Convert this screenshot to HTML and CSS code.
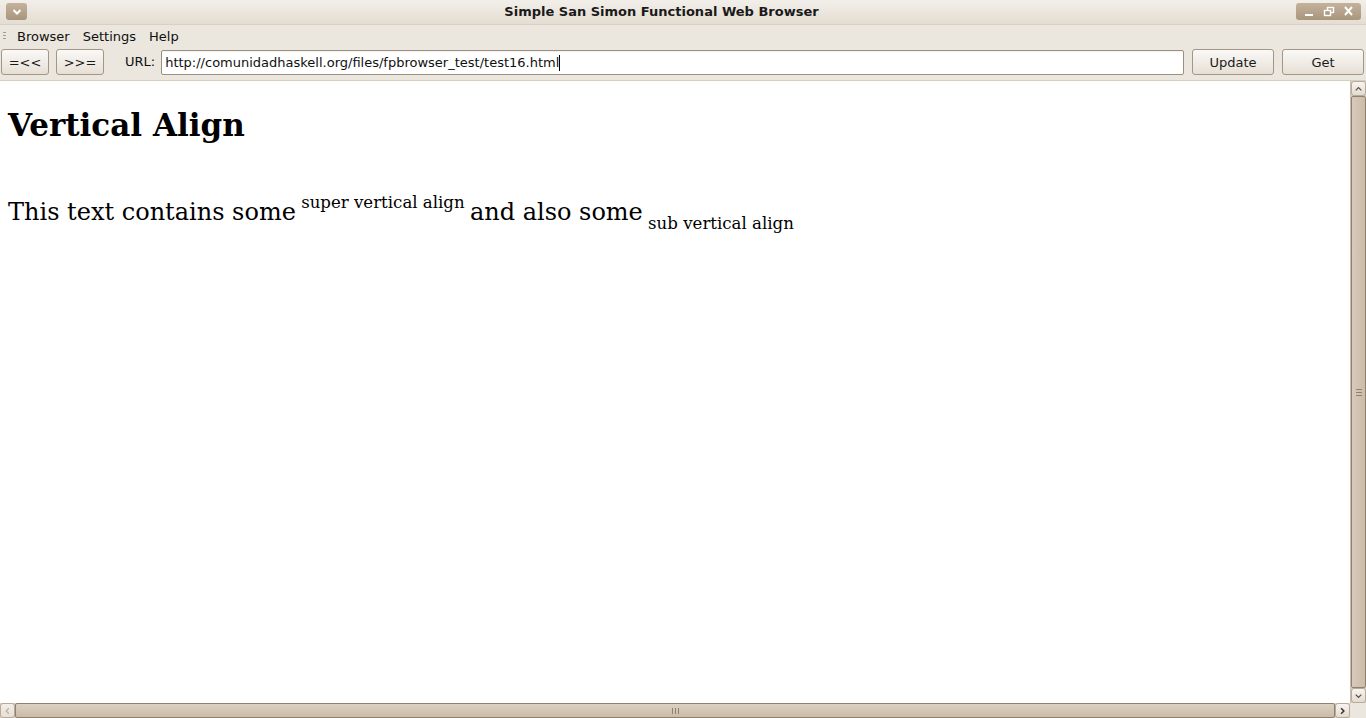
FILE: index.html
```html
<!DOCTYPE html>
<html>
<head>
<meta charset="utf-8">
<link rel="stylesheet" href="styles.css">
</head>
<body>
<div class="window">
  <div class="titlebar">
    <div class="wm-menu"><svg width="20" height="16" viewBox="0 0 20 16"><path d="M6.5 6 L10 9.5 L13.5 6" fill="none" stroke="#fff" stroke-width="2"/></svg></div>
    <div class="title">Simple San Simon Functional Web Browser</div>
    <div class="wm-buttons">
      <svg width="65" height="17" viewBox="0 0 65 17">
        <rect x="9" y="11" width="8" height="2" fill="#fff"/>
        <rect x="31.5" y="4.5" width="6" height="5" fill="none" stroke="#fff" stroke-width="1.4"/>
        <rect x="28.5" y="7.5" width="6" height="5" fill="#b19d84" stroke="#fff" stroke-width="1.4"/>
        <path d="M49 4 L56 12 M56 4 L49 12" stroke="#fff" stroke-width="2"/>
      </svg>
    </div>
  </div>
  <div class="menubar">
    <div class="grip"></div>
    <span class="menu-item">Browser</span>
    <span class="menu-item">Settings</span>
    <span class="menu-item">Help</span>
  </div>
  <div class="toolbar">
    <button class="btn btn-nav">=&lt;&lt;</button>
    <button class="btn btn-nav">&gt;&gt;=</button>
    <span class="url-label">URL:</span>
    <div class="entry">http://comunidadhaskell.org/files/fpbrowser_test/test16.html<span class="caret"></span></div>
    <button class="btn btn-wide">Update</button>
    <button class="btn btn-wide">Get</button>
  </div>
  <div class="main">
    <div class="viewport">
      <h1 class="heading">Vertical Align</h1>
      <p class="para">This text contains some<span class="sup"> super vertical align </span>and also some<span class="sub"> sub vertical align</span></p>
    </div>
    <div class="vscroll">
      <div class="sb-btn sb-up"><svg width="14" height="14" viewBox="0 0 14 14"><path d="M4 8.5 L7 5.5 L10 8.5" fill="none" stroke="#5a5048" stroke-width="1.4"/></svg></div>
      <div class="vtrough"><div class="vslider"><div class="vgrip"></div></div></div>
      <div class="sb-btn sb-down"><svg width="14" height="14" viewBox="0 0 14 14"><path d="M4 5.5 L7 8.5 L10 5.5" fill="none" stroke="#5a5048" stroke-width="1.4"/></svg></div>
    </div>
  </div>
  <div class="hscrollrow">
    <div class="hscroll">
      <div class="sb-btn sb-left"><svg width="14" height="14" viewBox="0 0 14 14"><path d="M8.5 4 L5.5 7 L8.5 10" fill="none" stroke="#bdb3a6" stroke-width="1.4"/></svg></div>
      <div class="htrough"><div class="hslider"><div class="hgrip"></div></div></div>
      <div class="sb-btn sb-right"><svg width="14" height="14" viewBox="0 0 14 14"><path d="M5.5 4 L8.5 7 L5.5 10" fill="none" stroke="#3a332c" stroke-width="1.6"/></svg></div>
    </div>
    <div class="corner"></div>
  </div>
</div>
</body>
</html>
```
FILE: styles.css
```css
* { box-sizing: border-box; }
html, body { margin: 0; padding: 0; }
body {
  width: 1366px;
  height: 718px;
  overflow: hidden;
  background: #ebe6de;
  font-family: "DejaVu Sans", sans-serif;
  font-size: 13px;
  color: #101010;
}
.window {
  display: flex;
  flex-direction: column;
  height: 718px;
}
.titlebar {
  height: 25px;
  flex: none;
  display: flex;
  align-items: center;
  padding: 0 5px 0 6px;
  background: linear-gradient(#f2efea, #e4ddd2);
  border-bottom: 1px solid #d8d0c4;
}
.wm-menu {
  width: 21px;
  height: 17px;
  border-radius: 3px;
  background: linear-gradient(#c4b29c, #a8957d);
  display: flex;
  align-items: center;
  justify-content: center;
  margin-top: -1px;
}
.title {
  flex: 1;
  text-align: center;
  font-weight: bold;
  font-size: 13px;
  color: #1a1a1a;
  margin-top: -2px;
}
.wm-buttons {
  width: 65px;
  height: 17px;
  border-radius: 3px;
  background: linear-gradient(#c4b29c, #a8957d);
  margin-top: -1px;
}
.wm-buttons svg { display: block; }
.menubar {
  height: 21px;
  flex: none;
  display: flex;
  align-items: center;
  padding-left: 3px;
  padding-top: 1px;
  background: #ebe6de;
}
.grip {
  width: 3px;
  height: 9px;
  background: repeating-linear-gradient(#a89c8c 0 1px, transparent 1px 3px);
  margin-right: 5px;
}
.menu-item {
  padding: 0 6px 0 6px;
  margin-right: 1px;
}
.toolbar {
  height: 34px;
  flex: none;
  display: flex;
  align-items: flex-start;
  padding: 3px 2px 0 1px;
  background: #ebe6de;
}
.btn {
  height: 26px;
  font-family: "DejaVu Sans", sans-serif;
  font-size: 13px;
  color: #1a1a1a;
  border: 1px solid #a39684;
  border-radius: 3px;
  background: linear-gradient(#faf9f7, #e6dfd5);
  padding: 0;
}
.btn-nav { width: 48px; margin-right: 7px; }
.btn-nav + .btn-nav { margin-right: 0; }
.btn-wide { width: 82px; margin-left: 8px; }
.url-label {
  margin-left: 21px;
  margin-right: 6px;
  line-height: 26px;
}
.entry {
  flex: 1;
  height: 25px;
  border: 1px solid #9d8f7d;
  border-radius: 2px;
  background: #fff;
  padding-left: 3px;
  display: flex;
  align-items: center;
  margin-top: 1px;
  box-shadow: inset 0 1px 1px rgba(0,0,0,0.06);
}
.caret {
  display: inline-block;
  width: 1px;
  height: 16px;
  background: #000;
}
.main {
  flex: 1;
  display: flex;
  min-height: 0;
  border-top: 1px solid #d6cec2;
}
.viewport {
  flex: 1;
  background: #fff;
  padding: 0 8px;
  font-family: "DejaVu Serif", serif;
  color: #000;
  overflow: hidden;
}
.heading {
  font-size: 31px;
  font-weight: bold;
  margin: 24px 0 0 0;
  line-height: 40px;
}
.para {
  font-size: 24px;
  margin: 43px 0 0 0;
  line-height: 30px;
}
.sup {
  font-size: 16.6px;
  vertical-align: 12px;
}
.sub {
  font-size: 16.6px;
  vertical-align: -9px;
}
.vscroll {
  width: 16px;
  display: flex;
  flex-direction: column;
  background: #d9d0c3;
  border-left: 1px solid #c8bdae;
}
.sb-btn {
  width: 15px;
  height: 15px;
  flex: none;
  display: flex;
  align-items: center;
  justify-content: center;
  background: linear-gradient(#f7f5f1, #e3dbd0);
  border: 1px solid #b7aa99;
  border-radius: 3px;
}
.vtrough {
  flex: 1;
  display: flex;
  padding: 0;
}
.vslider {
  flex: 1;
  display: flex;
  align-items: center;
  justify-content: center;
  border: 1px solid #8f8170;
  border-radius: 2px;
  background: linear-gradient(90deg, #d8cbbb, #cbbba7);
}
.vgrip {
  width: 6px;
  height: 7px;
  background: repeating-linear-gradient(#8f8170 0 1px, transparent 1px 3px);
}
.hscrollrow {
  height: 15px;
  flex: none;
  display: flex;
}
.hscroll {
  flex: 1;
  display: flex;
  background: #d9d0c3;
}
.htrough { flex: 1; display: flex; }
.hslider {
  flex: 1;
  display: flex;
  align-items: center;
  justify-content: center;
  border: 1px solid #8f8170;
  border-radius: 2px;
  background: linear-gradient(#ddd1c2, #cbbba7);
}
.hgrip {
  width: 7px;
  height: 6px;
  background: repeating-linear-gradient(90deg, #8f8170 0 1px, transparent 1px 3px);
}
.sb-left { background: linear-gradient(#f2eee8, #e6dfd5); }
.corner {
  width: 16px;
  background: #ebe6de;
}
```
